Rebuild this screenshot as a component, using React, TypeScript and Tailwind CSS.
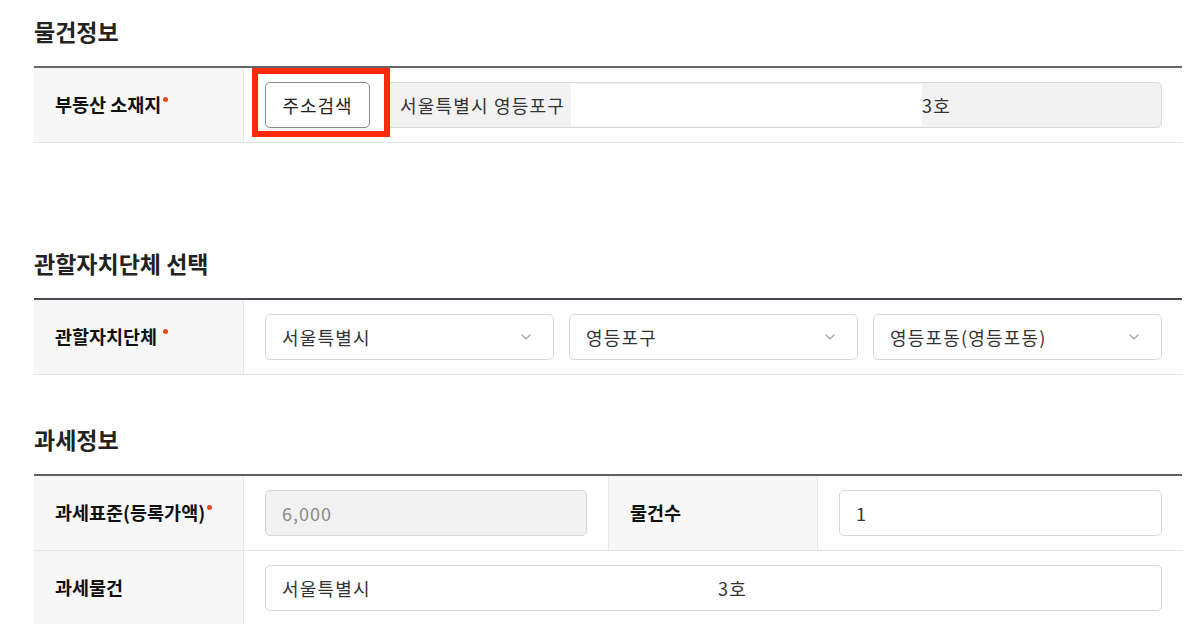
import React from "react";
import { ChevronDown } from "lucide-react";

const font = { fontFamily: '"Noto Sans CJK KR", "Noto Sans", sans-serif' };

function Dot({ gap = false }: { gap?: boolean }) {
  return (
    <span
      className={`relative -top-[6px] inline-block h-[5px] w-[5px] rounded-full bg-[#e9461c] ${
        gap ? "ml-[6px]" : "ml-[2px]"
      }`}
    />
  );
}

function Label({
  children,
  className = "",
}: {
  children: React.ReactNode;
  className?: string;
}) {
  return (
    <div
      className={`flex items-center whitespace-nowrap border-r border-[#e8e8e8] bg-[#f7f7f7] pl-[21px] text-[18.5px] font-bold text-[#111] ${className}`}
    >
      {children}
    </div>
  );
}

function Heading({ children, className = "" }: { children: React.ReactNode; className?: string }) {
  return (
    <h2 className={`mb-[20px] h-[30px] text-[23px] font-bold leading-[30px] text-[#222] ${className}`}>
      {children}
    </h2>
  );
}

function Select({ value }: { value: string }) {
  return (
    <div className="flex h-[46px] items-center justify-between rounded-[5px] border border-[#d9d9d9] bg-white pl-[16px] pr-[19px] text-[18px] tracking-[1.2px] text-[#333]">
      <span>{value}</span>
      <ChevronDown size={16} strokeWidth={2} className="text-[#a8a8a8]" />
    </div>
  );
}

export default function App() {
  return (
    <div className="min-h-screen bg-white pl-[34px] pr-[18px] pt-[16px]" style={font}>
      {/* 물건정보 */}
      <section>
        <Heading>물건정보</Heading>
        <div className="border-t-2 border-[#64646b]">
          <div className="grid h-[75px] grid-cols-[210px_1fr] border-b border-[#e5e5e5]">
            <Label>
              부동산 소재지
              <Dot />
            </Label>
            <div className="flex items-center pl-[21px] pr-[20px]">
              <div className="relative shrink-0">
                <button className="flex h-[46px] w-[105px] items-center justify-center rounded-[5px] border border-[#8c8c8c] bg-white text-[18px] tracking-[1px] text-[#222]">
                  주소검색
                </button>
                <span className="pointer-events-none absolute -left-[13px] -top-[14px] z-10 h-[69px] w-[138px] border-[6px] border-[#fb2a0a]" />
              </div>
              <div className="ml-[16px] flex h-[46px] flex-1 items-center overflow-hidden rounded-[5px] border border-[#d9d9d9] bg-[#f2f2f2] text-[18px] tracking-[1.2px] text-[#333]">
                <span className="w-[184px] shrink-0 overflow-hidden whitespace-nowrap pl-[13px]">서울특별시 영등포구</span>
                <span className="h-[42px] w-[351px] shrink-0 bg-white" />
                <span>3호</span>
              </div>
            </div>
          </div>
        </div>
      </section>

      {/* 관할자치단체 선택 */}
      <section className="mt-[105px]">
        <Heading>관할자치단체 선택</Heading>
        <div className="border-t-2 border-[#4a4a52]">
          <div className="grid h-[75px] grid-cols-[210px_1fr] border-b border-[#e5e5e5]">
            <Label>
              관할자치단체
              <Dot gap />
            </Label>
            <div className="grid grid-cols-3 items-center gap-[15px] pl-[21px] pr-[20px]">
              <Select value="서울특별시" />
              <Select value="영등포구" />
              <Select value="영등포동(영등포동)" />
            </div>
          </div>
        </div>
      </section>

      {/* 과세정보 */}
      <section className="mt-[49px]">
        <Heading>과세정보</Heading>
        <div className="border-t-2 border-[#5f5f66]">
          <div className="grid h-[75px] grid-cols-[210px_1fr_210px_1fr] border-b border-[#e5e5e5]">
            <Label>
              과세표준(등록가액)
              <Dot />
            </Label>
            <div className="flex items-center pl-[21px] pr-[21px]">
              <div className="flex h-[46px] w-full items-center rounded-[5px] border border-[#d6d6d6] bg-[#f2f2f2] pl-[16px] text-[18px] tracking-[1px] text-[#8a8a8a]">
                6,000
              </div>
            </div>
            <Label className="border-l">물건수</Label>
            <div className="flex items-center pl-[21px] pr-[20px]">
              <div className="flex h-[46px] w-full items-center rounded-[5px] border border-[#d9d9d9] bg-white pl-[16px] text-[18px] text-[#333]">
                1
              </div>
            </div>
          </div>
          <div className="grid h-[75px] grid-cols-[210px_1fr] border-b border-[#e5e5e5]">
            <Label>과세물건</Label>
            <div className="flex items-center pl-[21px] pr-[20px]">
              <div className="flex h-[46px] w-full items-center rounded-[5px] border border-[#d9d9d9] bg-white text-[18px] tracking-[1.2px] text-[#333]">
                <span className="w-[452px] shrink-0 pl-[16px]">서울특별시</span>
                <span>3호</span>
              </div>
            </div>
          </div>
        </div>
      </section>
    </div>
  );
}
